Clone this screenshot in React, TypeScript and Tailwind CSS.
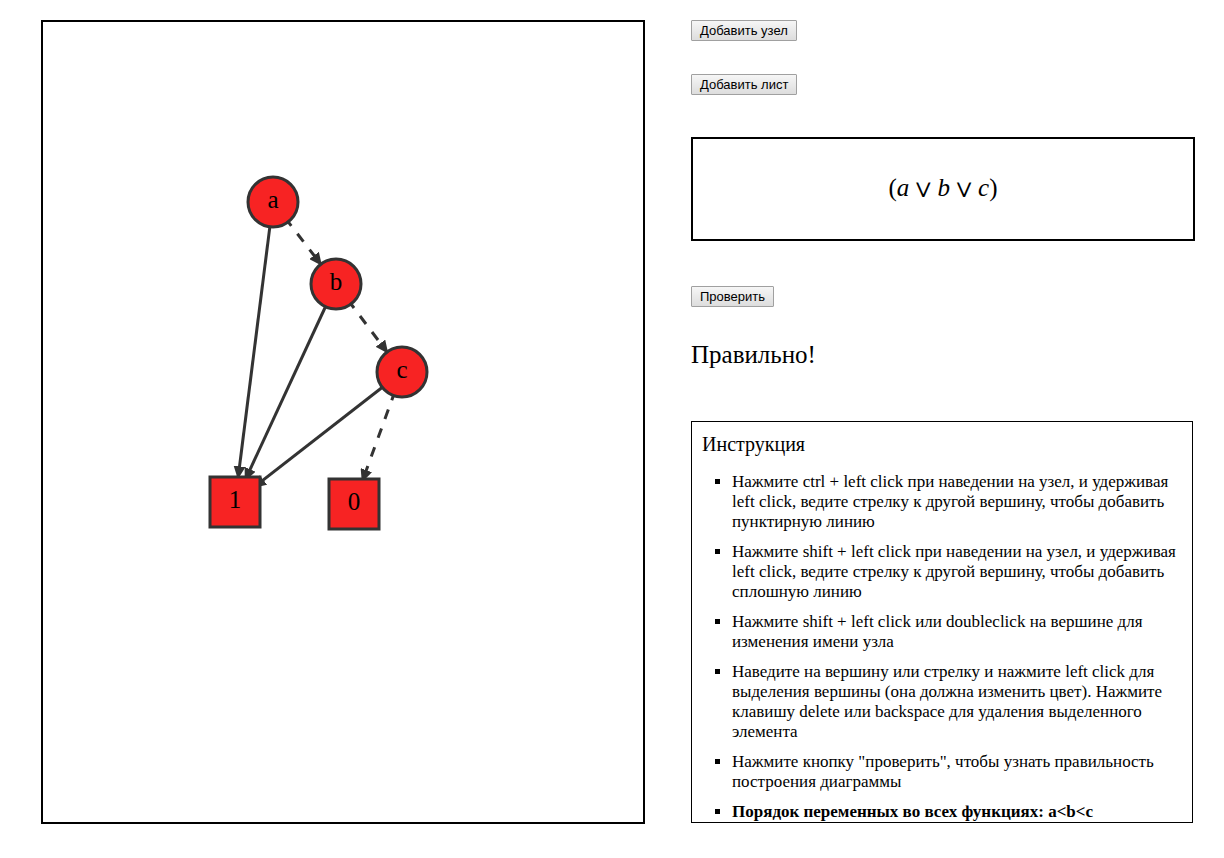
import type { ReactNode } from "react";

type DiagramNode = { id: string; x: number; y: number; leaf?: boolean };
type Edge = { from: string; to: string; dashed?: boolean };

const RADIUS = 25;

const nodes: DiagramNode[] = [
  { id: "a", x: 230, y: 180 },
  { id: "b", x: 293, y: 262 },
  { id: "c", x: 359, y: 350 },
  { id: "1", x: 192, y: 480, leaf: true },
  { id: "0", x: 311, y: 482, leaf: true },
];

const edges: Edge[] = [
  { from: "a", to: "1" },
  { from: "a", to: "b", dashed: true },
  { from: "b", to: "1" },
  { from: "b", to: "c", dashed: true },
  { from: "c", to: "1" },
  { from: "c", to: "0", dashed: true },
];

const instructions: ReactNode[] = [
  "Нажмите ctrl + left click при наведении на узел, и удерживая left click, ведите стрелку к другой вершину, чтобы добавить пунктирную линию",
  "Нажмите shift + left click при наведении на узел, и удерживая left click, ведите стрелку к другой вершину, чтобы добавить сплошную линию",
  "Нажмите shift + left click или doubleclick на вершине для изменения имени узла",
  "Наведите на вершину или стрелку и нажмите left click для выделения вершины (она должна изменить цвет). Нажмите клавишу delete или backspace для удаления выделенного элемента",
  'Нажмите кнопку "проверить", чтобы узнать правильность построения диаграммы',
  <strong key="order">Порядок переменных во всех функциях: a&lt;b&lt;c</strong>,
];

function Diagram() {
  const byId = (id: string) => nodes.find((n) => n.id === id)!;
  return (
    <svg viewBox="0 0 600 800" className="block w-full" role="img" aria-label="Диаграмма">
      <defs>
        <marker
          id="arrow"
          viewBox="0 0 13 12"
          refX="11"
          refY="6"
          markerWidth="13"
          markerHeight="12"
          markerUnits="userSpaceOnUse"
          orient="auto"
        >
          <path d="M0,0L13,6L0,12Z" fill="#333" />
        </marker>
      </defs>
      {edges.map((e) => {
        const s = byId(e.from);
        const t = byId(e.to);
        const length = Math.hypot(t.x - s.x, t.y - s.y);
        const k = (length - RADIUS) / length;
        return (
          <path
            key={e.from + e.to}
            d={`M${s.x},${s.y}L${s.x + (t.x - s.x) * k},${s.y + (t.y - s.y) * k}`}
            stroke="#333"
            strokeWidth="3"
            strokeDasharray={e.dashed ? "10 10" : undefined}
            markerEnd="url(#arrow)"
          />
        );
      })}
      {nodes.map((n) => (
        <g key={n.id}>
          {n.leaf ? (
            <rect x={n.x - RADIUS} y={n.y - RADIUS} width="50" height="50" fill="#f72323" stroke="#333" strokeWidth="3" />
          ) : (
            <circle cx={n.x} cy={n.y} r={RADIUS} fill="#f72323" stroke="#333" strokeWidth="3" />
          )}
          <text x={n.x} y={n.y + 6} textAnchor="middle" fontSize="25">
            {n.id}
          </text>
        </g>
      ))}
    </svg>
  );
}

function Button({ children }: { children: ReactNode }) {
  return (
    <button
      type="button"
      className="block h-[21px] rounded-[1px] border border-[#a0a0a0] bg-linear-to-b from-[#f6f6f6] to-[#dddddd] px-[8px] font-['Liberation_Sans',Arial,sans-serif] text-[13px] leading-[19px] text-black"
    >
      {children}
    </button>
  );
}

function Or() {
  return <span className="px-[5px] font-['DejaVu_Math_TeX_Gyre','DejaVu_Serif',serif] text-[23px]">∨</span>;
}

function Formula() {
  return (
    <p className="flex items-baseline text-[25px] leading-[30px]">
      <span>(</span>
      <i>a</i>
      <Or />
      <i>b</i>
      <Or />
      <i>c</i>
      <span>)</span>
    </p>
  );
}

export default function App() {
  return (
    <main className="grid grid-cols-[604fr_504fr] items-start gap-x-[46px] bg-white pt-5 pr-[29px] pb-8 pl-[41px] font-['Liberation_Serif','Times_New_Roman',serif] text-black">
      <section className="border-2 border-black">
        <Diagram />
      </section>
      <section className="flex flex-col items-start">
        <Button>Добавить узел</Button>
        <div className="mt-[33px]">
          <Button>Добавить лист</Button>
        </div>
        <div className="mt-[42px] flex h-[104px] w-full items-center justify-center border-2 border-black">
          <Formula />
        </div>
        <div className="mt-[45px]">
          <Button>Проверить</Button>
        </div>
        <p className="mt-[33px] text-[25px] leading-[30px]">Правильно!</p>
        <div className="mt-[51px] mr-[2px] self-stretch border border-black px-[10px] pt-[10px]">
          <h2 className="text-[20px] leading-6">Инструкция</h2>
          <ul className="mt-4 flex list-[square] flex-col gap-[10px] pl-[30px] text-[17px] leading-5">
            {instructions.map((item, i) => (
              <li key={i}>{item}</li>
            ))}
          </ul>
        </div>
      </section>
    </main>
  );
}
